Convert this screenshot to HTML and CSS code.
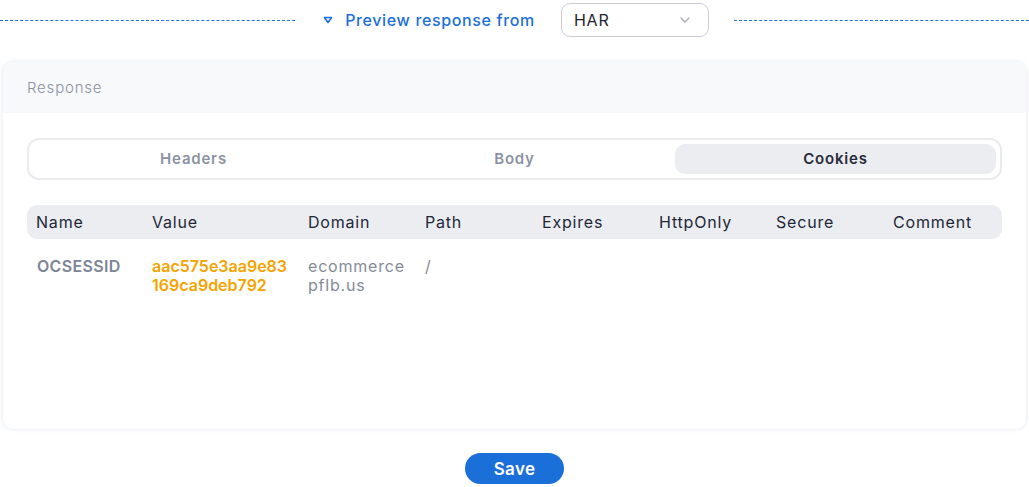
FILE: index.html
```html
<!DOCTYPE html>
<html lang="en">
<head>
    <meta charset="UTF-8">
    <title>Response preview</title>
    <link rel="stylesheet" href="styles.css">
</head>
<body>
    <div class="page">
        <div class="preview-bar">
            <div class="dash-line"></div>
            <div class="preview-title">
                <svg class="tri-icon" viewBox="0 0 10 8"><path d="M1.5 1.5h7L5 6.5z" fill="none" stroke="currentColor" stroke-width="1.6" stroke-linejoin="round"/></svg>
                <span>Preview response from</span>
            </div>
            <div class="select">
                <span>HAR</span>
                <svg class="chevron" viewBox="0 0 12 8"><path d="M2 2l4 4 4-4" fill="none" stroke="currentColor" stroke-width="1.4" stroke-linecap="round"/></svg>
            </div>
            <div class="dash-line"></div>
        </div>

        <div class="card">
            <div class="card-header">Response</div>
            <div class="card-body">
                <div class="tabs">
                    <div class="tab">Headers</div>
                    <div class="tab">Body</div>
                    <div class="tab active">Cookies</div>
                </div>

                <div class="table">
                    <div class="row head">
                        <div>Name</div>
                        <div>Value</div>
                        <div>Domain</div>
                        <div>Path</div>
                        <div>Expires</div>
                        <div>HttpOnly</div>
                        <div>Secure</div>
                        <div>Comment</div>
                    </div>
                    <div class="row">
                        <div class="c-name">OCSESSID</div>
                        <div class="c-value">aac575e3aa9e83<br>169ca9deb792</div>
                        <div class="c-text">ecommerce<br>pflb.us</div>
                        <div class="c-text">/</div>
                        <div></div>
                        <div></div>
                        <div></div>
                        <div></div>
                    </div>
                </div>
            </div>
        </div>

        <div class="actions">
            <button class="save-btn">Save</button>
        </div>
    </div>
</body>
</html>
```

FILE: styles.css
```css
body {
    margin: 0;
    font-family: Inter, "Open Sans", sans-serif;
    letter-spacing: 0.05em;
    background: #fff;
    color: #222838;
}

.page {
    width: 1029px;
}

.preview-bar {
    display: flex;
    align-items: center;
    height: 40px;
}

.dash-line {
    flex: 1;
    border-top: 1px dashed #1a73e8;
}

.preview-title {
    display: flex;
    align-items: center;
    gap: 12px;
    padding: 0 26px 0 28px;
    color: #1b6fd9;
    font-size: 16px;
    font-weight: 500;
    letter-spacing: 0.04em;
}

.tri-icon {
    width: 10px;
    height: 8px;
}

.select {
    display: flex;
    align-items: center;
    justify-content: space-between;
    box-sizing: border-box;
    width: 148px;
    height: 34px;
    margin-right: 25px;
    padding: 0 17px 0 12px;
    border: 1px solid #c8ccd2;
    border-radius: 9px;
    font-size: 16px;
    color: #1f2330;
}

.chevron {
    width: 12px;
    height: 8px;
    color: #a8adb6;
}

.card {
    margin: 22px 3px 0;
    border-radius: 10px;
    background: #fff;
    box-shadow: 0 0 4px rgba(160, 175, 200, 0.35);
    overflow: hidden;
}

.card-header {
    height: 51px;
    line-height: 52px;
    padding: 0 24px;
    background: #f8f9fa;
    color: #8a93a1;
    font-size: 15px;
    font-weight: 300;
}

.card-body {
    padding: 25px 24px 0;
    height: 291px;
}

.tabs {
    display: flex;
    padding: 4px;
    border: 2px solid #e9ebef;
    border-radius: 12px;
}

.tab {
    flex: 1;
    height: 30px;
    line-height: 30px;
    text-align: center;
    border-radius: 10px;
    color: #8b93a3;
    font-size: 15px;
    font-weight: 600;
}

.tab.active {
    background: #ecedf1;
    color: #262b3a;
}

.table {
    margin-top: 25px;
}

.row {
    display: grid;
    grid-template-columns: 116px 156px 117px 117px 117px 117px 117px 1fr;
    padding: 0 0 0 9px;
}

.row.head {
    height: 34px;
    align-items: center;
    background: #ecedf1;
    border-radius: 10px;
    font-size: 16px;
    color: #222838;
}

.row + .row {
    padding-top: 18px;
    font-size: 16px;
    line-height: 19px;
}

.c-name {
    padding-left: 1px;
    color: #7c8596;
    font-weight: 600;
    letter-spacing: 0.02em;
}

.c-value {
    color: #f4a300;
    font-weight: 600;
    letter-spacing: 0;
}

.c-text {
    color: #868c98;
}

.actions {
    display: flex;
    justify-content: center;
    padding-top: 24px;
}

.save-btn {
    width: 99px;
    height: 31px;
    border: none;
    border-radius: 16px;
    background: #1a6fd8;
    color: #fff;
    font-family: inherit;
    font-size: 17px;
    font-weight: 600;
    letter-spacing: 0.02em;
}
```
